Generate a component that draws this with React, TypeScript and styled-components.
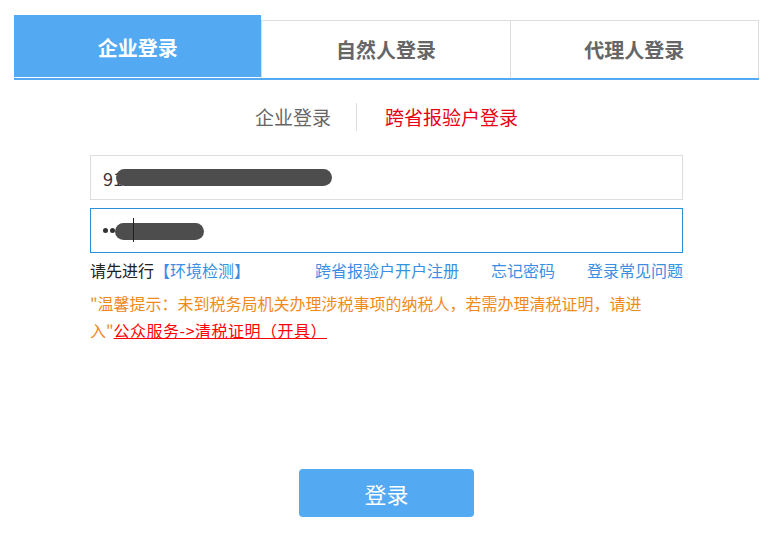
import React from "react";
import styled, { createGlobalStyle } from "styled-components";

const GlobalStyle = createGlobalStyle`
  html, body {
    margin: 0;
    padding: 0;
    background: #ffffff;
  }
  body {
    font-family: "Noto Sans CJK SC", "Microsoft YaHei", "Liberation Sans", sans-serif;
    color: #333;
  }
`;

const BLUE = "#54aaf2";

const Page = styled.div`
  width: 745px;
  padding: 15px 0 0 14px;
`;

const TabBar = styled.div`
  display: flex;
  align-items: flex-end;
  height: 63px;
  border-bottom: 2px solid ${BLUE};
`;

const Tab = styled.div<{ $active?: boolean; $first?: boolean }>`
  flex: 1;
  display: flex;
  align-items: center;
  justify-content: center;
  box-sizing: border-box;
  font-size: 20px;
  font-weight: 700;
  height: ${(p) => (p.$active ? "62px" : "58px")};
  margin-bottom: ${(p) => (p.$active ? "1px" : "0")};
  padding-top: ${(p) => (p.$active ? "2px" : "0")};
  background: ${(p) => (p.$active ? BLUE : "#ffffff")};
  color: ${(p) => (p.$active ? "#ffffff" : "#666666")};
  border-top: ${(p) => (p.$active ? "none" : "1px solid #dddddd")};
  border-right: ${(p) => (p.$active ? "none" : "1px solid #dddddd")};
  border-left: ${(p) => (p.$first ? "1px solid #dddddd" : "none")};
`;

const Form = styled.div`
  width: 593px;
  margin: 0 auto;
  display: flex;
  flex-direction: column;
`;

const SubTabs = styled.div`
  display: flex;
  justify-content: center;
  align-items: center;
  margin-top: 23px;
  height: 28px;
  font-size: 19px;
  line-height: 28px;
`;

const SubTab = styled.span<{ $red?: boolean }>`
  color: ${(p) => (p.$red ? "#e60012" : "#666666")};
`;

const Divider = styled.span`
  width: 1px;
  height: 28px;
  background: #dddddd;
  margin: 0 28px 0 25px;
`;

const Field = styled.div<{ $focused?: boolean }>`
  position: relative;
  box-sizing: border-box;
  height: 45px;
  margin-top: ${(p) => (p.$focused ? "8px" : "24px")};
  border: 1px solid ${(p) => (p.$focused ? "#2a8ed8" : "#dddddd")};
  display: flex;
  align-items: center;
  padding-left: 12px;
  font-size: 18px;
  color: #333;
`;

const Dot = styled.span`
  display: inline-block;
  width: 5px;
  height: 5px;
  border-radius: 50%;
  background: #333;
  margin-right: 2px;
`;

const Redaction = styled.span<{ $left: number; $top: number; $w: number }>`
  position: absolute;
  left: ${(p) => p.$left}px;
  top: ${(p) => p.$top}px;
  width: ${(p) => p.$w}px;
  height: 17px;
  border-radius: 8.5px;
  background: #4d4d4d;
`;

const Caret = styled.span`
  position: absolute;
  left: 42px;
  top: 9px;
  width: 1px;
  height: 24px;
  background: #222;
`;

const LinkRow = styled.div`
  display: flex;
  justify-content: space-between;
  align-items: center;
  margin-top: 6px;
  font-size: 16px;
  line-height: 22px;
`;

const Hint = styled.span`
  color: #222;
`;

const BlueLink = styled.a`
  color: #3b8fe3;
  text-decoration: none;
  cursor: pointer;
`;

const RightLinks = styled.div`
  display: flex;
  gap: 32px;
`;

const Notice = styled.p`
  width: 560px;
  margin: 9px 0 0 0;
  font-size: 16px;
  line-height: 27px;
  color: #f08a1a;
`;

const RedLink = styled.a`
  color: #ff0000;
  text-decoration: underline;
  letter-spacing: 0.5px;
  font-variant-ligatures: none;
  cursor: pointer;
`;

const LoginButton = styled.button`
  align-self: center;
  margin-top: 125px;
  width: 175px;
  height: 48px;
  border: none;
  border-radius: 4px;
  background: ${BLUE};
  color: #ffffff;
  font-family: inherit;
  font-size: 22px;
  cursor: pointer;
`;

export default function App() {
  return (
    <>
      <GlobalStyle />
      <Page>
        <TabBar>
          <Tab $active>企业登录</Tab>
          <Tab $first>自然人登录</Tab>
          <Tab>代理人登录</Tab>
        </TabBar>
        <Form>
          <SubTabs>
            <SubTab>企业登录</SubTab>
            <Divider />
            <SubTab $red>跨省报验户登录</SubTab>
          </SubTabs>
          <Field>
            91
            <Redaction $left={25} $top={13} $w={216} />
          </Field>
          <Field $focused>
            <Dot />
            <Dot />
            <Redaction $left={24} $top={14} $w={89} />
            <Caret />
          </Field>
          <LinkRow>
            <span>
              <Hint>请先进行</Hint>
              <BlueLink>【环境检测】</BlueLink>
            </span>
            <RightLinks>
              <BlueLink>跨省报验户开户注册</BlueLink>
              <BlueLink>忘记密码</BlueLink>
              <BlueLink>登录常见问题</BlueLink>
            </RightLinks>
          </LinkRow>
          <Notice>
            "温馨提示：未到税务局机关办理涉税事项的纳税人，若需办理清税证明，请进入"
            <RedLink>公众服务-&gt;清税证明（开具）</RedLink>
          </Notice>
          <LoginButton>登录</LoginButton>
        </Form>
      </Page>
    </>
  );
}
